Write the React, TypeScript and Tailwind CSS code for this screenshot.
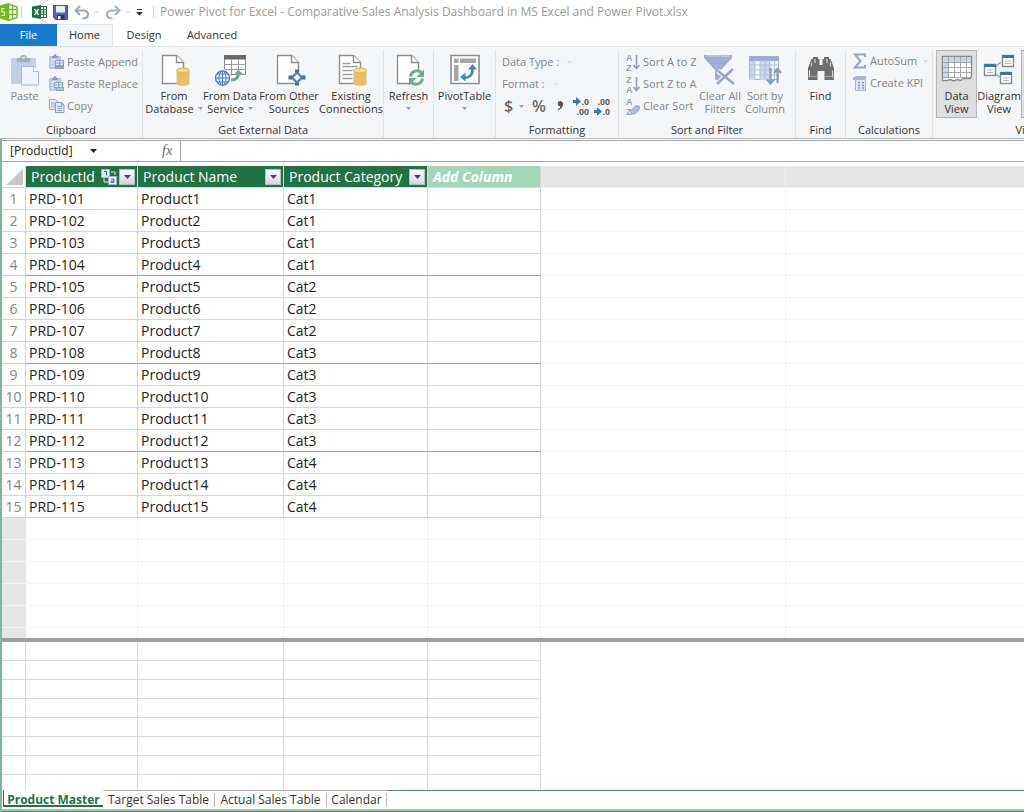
import { ReactNode } from "react";

type IconButtonProps = {
    label: string;
    icon: ReactNode;
    caret?: boolean;
};

type BigButtonProps = {
    lines: string[];
    icon: ReactNode;
    width: string;
    muted?: boolean;
    caret?: boolean;
    active?: boolean;
};

type GroupProps = {
    title?: string;
    width: string;
    children: ReactNode;
};

const products = [
    { id: "PRD-101", name: "Product1", category: "Cat1" },
    { id: "PRD-102", name: "Product2", category: "Cat1" },
    { id: "PRD-103", name: "Product3", category: "Cat1" },
    { id: "PRD-104", name: "Product4", category: "Cat1" },
    { id: "PRD-105", name: "Product5", category: "Cat2" },
    { id: "PRD-106", name: "Product6", category: "Cat2" },
    { id: "PRD-107", name: "Product7", category: "Cat2" },
    { id: "PRD-108", name: "Product8", category: "Cat3" },
    { id: "PRD-109", name: "Product9", category: "Cat3" },
    { id: "PRD-110", name: "Product10", category: "Cat3" },
    { id: "PRD-111", name: "Product11", category: "Cat3" },
    { id: "PRD-112", name: "Product12", category: "Cat3" },
    { id: "PRD-113", name: "Product13", category: "Cat4" },
    { id: "PRD-114", name: "Product14", category: "Cat4" },
    { id: "PRD-115", name: "Product15", category: "Cat4" },
];

const emptyRows = [1, 2, 3, 4, 5];
const measureRows = [1, 2, 3, 4, 5, 6, 7];

const Caret = ({ color = "#9a9a9a" }: { color?: string }) => (
    <svg width="5" height="3" viewBox="0 0 5 3" className="shrink-0">
        <path d="M0 0h5L2.500 3z" fill={color} />
    </svg>
);

/* ---------- quick access icons ---------- */

const PivotLogo = () => (
    <svg width="19" height="20" viewBox="0 0 19 20">
        <path d="M0 3.500L8 1v18L0 16.500z" fill="#74b92a" />
        <path d="M8.500 2L17 5v10.500L8.500 18.500z" fill="#fff" stroke="#74b92a" strokeWidth="1.500" />
        <path d="M12.500 3.500v13.500M8.500 7.500H17M8.500 12.500H17" stroke="#74b92a" strokeWidth="1.300" />
        <path d="M4.500 6.500H2v3.500h2.500v3.500H1.500" stroke="#dff2c4" strokeWidth="1.200" fill="none" />
    </svg>
);

const ExcelLogo = () => (
    <svg width="15" height="14" viewBox="0 0 15 14">
        <path d="M8 1.500h6.500v11H8z" fill="#fff" stroke="#217346" />
        <path d="M11.500 2v10M8 4.500h6M8 7h6M8 9.500h6" stroke="#217346" />
        <path d="M0 1.500L9 0v14L0 12.500z" fill="#1d6f42" />
        <path d="M2.500 4.200l4 5.600M6.500 4.200l-4 5.600" stroke="#fff" strokeWidth="1.400" />
    </svg>
);

const SaveIcon = () => (
    <svg width="15" height="15" viewBox="0 0 15 15">
        <path d="M.5.500h14v14h-12l-2-2z" fill="#5664b8" stroke="#4450a0" />
        <path d="M3 1h9v6.500H3z" fill="#e9ecfa" />
        <path d="M4 10h7.500v4.500H4z" fill="#2f3560" />
        <path d="M5 11h2.500v3H5z" fill="#fff" />
    </svg>
);

const UndoIcon = () => (
    <svg width="16" height="15" viewBox="0 0 16 15">
        <path d="M2 5.500h7.500c6.500 0 6 8-1 8" fill="none" stroke="#9aa6c4" strokeWidth="2.200" />
        <path d="M6 1L1.500 5.500 6 10" fill="none" stroke="#9aa6c4" strokeWidth="2.200" />
    </svg>
);

const RedoIcon = () => (
    <svg width="16" height="15" viewBox="0 0 16 15">
        <path d="M14 5.500H6.500c-6.500 0-6 8 1 8" fill="none" stroke="#a5b1cb" strokeWidth="2.200" />
        <path d="M10 1l4.500 4.500L10 10" fill="none" stroke="#a5b1cb" strokeWidth="2.200" />
    </svg>
);

/* ---------- ribbon icons ---------- */

const PasteIcon = () => (
    <svg width="30" height="32" viewBox="0 0 30 32">
        <path d="M1 4h25v26H1z" fill="#c3cee4" />
        <path d="M7 8V4h3c0-4 7-4 7 0h3v4z" fill="#a2abc0" />
        <path d="M12 3.500h3" stroke="#eef1f7" strokeWidth="1.500" />
        <path d="M11.500 12.500h12l5 5v13.500h-17z" fill="#f0f4fb" stroke="#aab9d6" />
        <path d="M23.500 12.500v5h5" fill="#fff" stroke="#aab9d6" />
    </svg>
);

const PasteAppendIcon = () => (
    <svg width="16" height="16" viewBox="0 0 16 16">
        <path d="M0 2h12v13H0z" fill="#bccae1" />
        <path d="M3 4V2h1.500c0-2.500 3-2.500 3 0H9v2z" fill="#8b9bb9" />
        <path d="M2 6h5M2 9h3M2 12h3" stroke="#eef2f8" />
        <path d="M6.500 6.500h8v8h-8z" fill="#e6ecf6" stroke="#8b9fc3" />
        <path d="M6.500 9h8M6.500 11.500h8M10.500 6.500v8" stroke="#8b9fc3" />
        <path d="M6 12h9v3H6z" fill="#8fa3c6" />
    </svg>
);

const PasteReplaceIcon = () => (
    <svg width="16" height="16" viewBox="0 0 16 16">
        <path d="M0 2h12v13H0z" fill="#bccae1" />
        <path d="M3 4V2h1.500c0-2.500 3-2.500 3 0H9v2z" fill="#8b9bb9" />
        <path d="M2 6h5M2 9h3M2 12h3" stroke="#eef2f8" />
        <path d="M5.500 6.500h8v5h-8z" fill="#e6ecf6" stroke="#8b9fc3" />
        <path d="M5.500 9h8M9.500 6.500v5" stroke="#8b9fc3" />
        <path d="M7 11h8v4H7z" fill="#8fa3c6" />
        <path d="M8 13h6" stroke="#dfe7f3" />
    </svg>
);

const CopyIcon = () => (
    <svg width="16" height="16" viewBox="0 0 16 16">
        <path d="M.5 1.500h6l2.500 2.500v7.500H.5z" fill="#e6ecf6" stroke="#9badcc" />
        <path d="M2 5h4M2 7h4M2 9h4" stroke="#9badcc" />
        <path d="M6.500 4.500h6l2.500 2.500v7.500H6.500z" fill="#dfe7f3" stroke="#8b9fc3" />
        <path d="M12.500 4.500v2.500H15M8.500 8.500h4.500M8.500 10.500h4.500M8.500 12.500h4.500" fill="none" stroke="#8b9fc3" />
    </svg>
);

const Page = () => (
    <>
        <path d="M1.500 1.500h14l7 7v21h-21z" fill="#fff" stroke="#8d8d8d" strokeWidth="1.400" />
        <path d="M15.500 1.500v7h7" fill="#fff" stroke="#8d8d8d" strokeWidth="1.400" />
    </>
);

const Cylinder = () => (
    <>
        <path d="M15.500 17v12.500c0 3 13 3 13 0V17z" fill="#e7bd66" />
        <ellipse cx="22" cy="16.500" rx="6.500" ry="2.500" fill="#f4d691" stroke="#e0b052" />
    </>
);

const FromDatabaseIcon = () => (
    <svg width="26" height="32" viewBox="0 0 26 32" className="overflow-visible">
        <Page />
        <Cylinder />
    </svg>
);

const DataServiceIcon = () => (
    <svg width="33" height="34" viewBox="0 0 33 34">
        <path d="M10.500 1.500h21v19h-21z" fill="#fff" stroke="#8d8d8d" />
        <path d="M10 1h22v4.500H10z" fill="#6a6a6a" />
        <path d="M10.500 10.500h21M10.500 15.500h21M17.500 5v15.500M24.500 5v15.500" stroke="#9c9c9c" />
        <circle cx="8.500" cy="24" r="8.500" fill="#f4f6f8" />
        <circle cx="8.500" cy="24" r="7" fill="#e8f0f9" stroke="#4d83bd" strokeWidth="1.400" />
        <path d="M1.500 24h14M8.500 17v14M3 20h11M3 28h11" stroke="#4d83bd" fill="none" />
        <ellipse cx="8.500" cy="24" rx="3.500" ry="7" fill="none" stroke="#4d83bd" />
        <path d="M17 26c6 0 7.500-3 7.500-7" fill="none" stroke="#74a98c" strokeWidth="3" />
        <path d="M19.500 21l5-5.500 5 5.500z" fill="#74a98c" />
    </svg>
);

const OtherSourcesIcon = () => (
    <svg width="26" height="32" viewBox="0 0 26 32" className="overflow-visible">
        <Page />
        <path d="M21 15.500l8.500 8-8.500 8-8.500-8z" fill="#f4f6f8" />
        <path d="M21 18.500l5 5-5 5-5-5z" fill="#fff" stroke="#5585b5" strokeWidth="2.400" />
        <path d="M19 15.500h4v3h-4zM19 28.500h4v3h-4zM12.500 21.500h3.500v4h-3.500zM26 21.500h3.500v4H26z" fill="#41709f" />
    </svg>
);

const ExistingIcon = () => (
    <svg width="26" height="32" viewBox="0 0 26 32" className="overflow-visible">
        <Page />
        <path d="M4.500 9.500h8M4.500 12.500h15M4.500 16.500h10M4.500 20.500h10M4.500 24.500h10" stroke="#a0a0a0" strokeWidth="1.400" />
        <Cylinder />
    </svg>
);

const RefreshIcon = () => (
    <svg width="26" height="32" viewBox="0 0 26 32" className="overflow-visible">
        <Page />
        <circle cx="20.500" cy="23.500" r="8.500" fill="#f4f6f8" />
        <path d="M14.500 22.500c1-6 8.500-7.500 11.500-3M26.500 24.500c-1 6-8.500 7.500-11.500 3" fill="none" stroke="#74a98c" strokeWidth="3" />
        <path d="M28 15.500v7.500h-7.500zM13 31.500V24h7.500z" fill="#74a98c" />
    </svg>
);

const PivotTableIcon = () => (
    <svg width="30" height="32" viewBox="0 0 30 32">
        <path d="M1 1.500h28v28H1z" fill="#fff" stroke="#8d8d8d" strokeWidth="1.600" />
        <path d="M4 4.500h4.500V9H4zM10 4.500h16V9H10zM4 11h4.500v16H4z" fill="#a5a5a5" />
        <path d="M13.500 23.500c6 1 9.500-3 9-9" fill="none" stroke="#4783c0" strokeWidth="2.600" />
        <path d="M18 15.500l4.500-5.500 4.500 5.500zM15.500 18.500v9l-5.500-4.500z" fill="#4783c0" />
    </svg>
);

const letters = "font-['Liberation_Sans',sans-serif] text-[9px] font-bold";

const SortIcon = ({ first, second }: { first: string; second: string }) => (
    <svg width="16" height="20" viewBox="0 0 16 20" className={`overflow-visible ${letters}`}>
        <text x="1" y="9" fill="#93a0bd">{first}</text>
        <text x="1" y="19" fill="#93a0bd">{second}</text>
        <path d="M11.500 3v13M8.500 13l3 3.500 3-3.500" fill="none" stroke="#93a0bd" strokeWidth="1.600" />
    </svg>
);

const ClearSortIcon = () => (
    <svg width="16" height="20" viewBox="0 0 16 20" className={`overflow-visible ${letters}`}>
        <text x="1" y="9" fill="#93a0bd">A</text>
        <text x="1" y="19" fill="#93a0bd">Z</text>
        <path d="M6 14.500l5-5 3.500 1-.5 3.500-4.500 4H6z" fill="#afbfdd" stroke="#93a5c8" />
    </svg>
);

const FunnelIcon = () => (
    <svg width="34" height="32" viewBox="0 0 34 32">
        <path d="M1 1h28v3L18 16v14l-6-5v-9L1 4z" fill="#9eaed0" />
        <path d="M3 2h24" stroke="#c0cbe1" strokeWidth="1.500" />
        <path d="M15 17l16 13M30 15L14 30" stroke="#f4f6f8" strokeWidth="5" />
        <path d="M15 17l16 13M30 15L14 30" stroke="#9ba8c4" strokeWidth="2.600" />
    </svg>
);

const SortColumnIcon = () => (
    <svg width="34" height="32" viewBox="0 0 34 32">
        <path d="M1.500 2.500h29v23h-29z" fill="#f3f6fb" stroke="#9fb1d2" />
        <path d="M12 6h10v20H12zM2 6h5v20H2z" fill="#cbd6ea" />
        <path d="M1 2h30v5H1z" fill="#9cadce" />
        <path d="M1.500 11h29M1.500 16h29M1.500 21h29M7 6v20M12 6v20M17 6v20M22 6v20M26.500 6v20" stroke="#b3c1dc" />
        <path d="M22.500 14v15M19 25.500l3.500 4 3.500-4M29.500 29V15M26 19l3.500-4 3.500 4" fill="none" stroke="#8c9dbf" strokeWidth="2.200" />
    </svg>
);

const BinocularsIcon = () => (
    <svg width="28" height="28" viewBox="0 0 28 28">
        <path d="M6 3h5v2h1.500v6h3V5H17V3h5v2h1.500l3.500 9v12h-9.500v-9h-7v9H1V14l3.500-9H6z" fill="#6f6f6f" />
        <path d="M4.500 8.500v4M23.500 8.500v4M2.500 16.500v7M25.500 16.500v7M8 5v4M20 5v4" stroke="#d7d7d7" strokeWidth="1.200" />
        <path d="M1 22.500h9.500M17.500 22.500H27" stroke="#a5a5a5" />
    </svg>
);

const SumIcon = () => (
    <svg width="14" height="16" viewBox="0 0 14 16">
        <path d="M12 4V1.500H2L7.500 8 2 14.500h10V12" fill="none" stroke="#94a5c6" strokeWidth="2" />
    </svg>
);

const KpiIcon = () => (
    <svg width="14" height="16" viewBox="0 0 14 16">
        <path d="M2.500 1.500h10v14h-10z" fill="#dfe6f2" stroke="#a4b4d1" />
        <path d="M0 2h13v3H0z" fill="#a9b8d4" />
        <path d="M5 7.500h2M9 7.500h2M5 10.500h2M9 10.500h2M5 13h2M9 13h2" stroke="#8799bd" strokeWidth="1.400" />
    </svg>
);

const DataViewIcon = () => (
    <svg width="32" height="32" viewBox="0 0 32 32">
        <path d="M1.500 2.500h29v19l-1 3h-7l-3 2-3-1-4 1.500-3-1.500-3 1H1.500z" fill="#fff" stroke="#8a8a8a" strokeWidth="1.400" />
        <path d="M2 3h28v5H2zM2 8h5.500v16H2z" fill="#c5d8ea" />
        <path d="M2 8.500h28M2 13.500h28M2 18.500h28M2 23.500h27M7.500 3v20M13.500 3v20M19.500 3v20M25.500 3v20" stroke="#a8a8a8" />
    </svg>
);

const DiagramViewIcon = () => (
    <svg width="32" height="32" viewBox="0 0 32 32">
        <path d="M12 13l6-5M12 20l5 3" stroke="#8da694" strokeWidth="1.400" />
        <path d="M19.500 1.500h11v11h-11zM1.500 10.500h11v11h-11zM17.500 18.500h11v11h-11z" fill="#fff" stroke="#8a8a8a" strokeWidth="1.400" />
        <path d="M19 1h12v3H19zM1 10h12v3H1zM17 18h12v3H17z" fill="#3a75ac" />
        <path d="M22 7h6M22 9.500h6M4 16h6M4 18.500h6M20 24h6M20 26.500h6" stroke="#b5b5b5" />
    </svg>
);

const DecimalIcon = ({ top, bottom, increase }: { top: string; bottom: string; increase?: boolean }) => (
    <svg width="17" height="20" viewBox="0 0 17 20" className={`overflow-visible ${letters}`}>
        <text x="17" y="9" textAnchor="end" fill="#555">{top}</text>
        <text x="17" y="19" textAnchor="end" fill="#555">{bottom}</text>
        {increase ? (
            <path d="M1 4h3V1l5 4.500-5 4.500V7H1z" fill="#3d78b4" />
        ) : (
            <path d="M1 14h3v-3l5 4.500-5 4.500v-3H1z" fill="#3d78b4" />
        )}
    </svg>
);

/* ---------- ribbon parts ---------- */

const Group = ({ title, width, children }: GroupProps) => (
    <section className={`${width} flex shrink-0 flex-col border-r border-[#e2e4e6]`}>
        <div className="flex h-[73px] justify-center">{children}</div>
        <h2 className="text-center leading-4">{title}</h2>
    </section>
);

const BigButton = ({ lines, icon, width, muted, caret, active }: BigButtonProps) => (
    <button
        className={`${width} flex h-[68px] shrink-0 flex-col items-center border pt-[3px] leading-[13px] whitespace-nowrap ${
            active ? "border-[#b5b5b5] bg-[#dedede]" : "border-transparent"
        } ${muted ? "text-[#858585]" : "text-[#333]"}`}
    >
        <span className="flex h-[35px] items-start justify-center">{icon}</span>
        {lines.map((line, index) => (
            <span key={line} className="flex items-center gap-1">
                {line}
                {caret && index === 1 && <Caret />}
            </span>
        ))}
        {caret && lines.length === 1 && <span className="flex h-3 items-center"><Caret /></span>}
    </button>
);

const SmallButton = ({ label, icon, caret }: IconButtonProps) => (
    <button className="flex h-[22px] items-center gap-0.5 whitespace-nowrap text-[#858585]">
        <span className="flex w-4 justify-center">{icon}</span>
        {label}
        {caret && <span className="pl-1"><Caret color="#dcdcdc" /></span>}
    </button>
);

const Ribbon = () => (
    <div className="flex h-[93px] overflow-hidden border-y border-t-[#e3e5e7] border-b-[#b3b6b9] bg-[#f4f6f8] pt-[3px] text-[11px] text-[#333]">
        <Group title="Clipboard" width="w-[143px]">
            <BigButton width="w-[49px]" lines={["Paste"]} icon={<PasteIcon />} muted />
            <div className="flex flex-1 flex-col pt-px">
                <SmallButton label="Paste Append" icon={<PasteAppendIcon />} />
                <SmallButton label="Paste Replace" icon={<PasteReplaceIcon />} />
                <SmallButton label="Copy" icon={<CopyIcon />} />
            </div>
        </Group>
        <Group title="Get External Data" width="w-[241px]">
            <BigButton width="w-[58px]" lines={["From", "Database"]} icon={<FromDatabaseIcon />} caret />
            <BigButton width="w-[54px]" lines={["From Data", "Service"]} icon={<DataServiceIcon />} caret />
            <BigButton width="w-[64px]" lines={["From Other", "Sources"]} icon={<OtherSourcesIcon />} />
            <BigButton width="w-[60px]" lines={["Existing", "Connections"]} icon={<ExistingIcon />} />
        </Group>
        <Group width="w-[50px]">
            <BigButton width="w-[46px]" lines={["Refresh"]} icon={<RefreshIcon />} caret />
        </Group>
        <Group width="w-[62px]">
            <BigButton width="w-[58px]" lines={["PivotTable"]} icon={<PivotTableIcon />} caret />
        </Group>
        <Group title="Formatting" width="w-[123px]">
            <div className="flex flex-1 flex-col pt-px pl-1.5 text-[#858585]">
                <button className="flex h-[22px] items-center gap-2">
                    Data Type : <Caret color="#e3e3e3" />
                </button>
                <button className="flex h-[22px] items-center gap-2">
                    Format : <Caret color="#e3e3e3" />
                </button>
                <div className="flex h-[22px] items-center text-base leading-5 text-[#666]">
                    <button className="flex w-7 items-center gap-1.5 pl-0.5 font-semibold">
                        $ <Caret />
                    </button>
                    <button className="w-[18px] font-semibold">%</button>
                    <button className="flex w-6 justify-center" aria-label="Comma style">
                        <svg width="7" height="10" viewBox="0 0 7 10">
                            <path d="M3 0c4 0 5 6-2 9.500L.5 8.500C3 7 3.500 6 3 5 0 5.500 0 0 3 0z" fill="#555" />
                        </svg>
                    </button>
                    <button className="w-[21px]"><DecimalIcon top=".0" bottom=".00" increase /></button>
                    <button><DecimalIcon top=".00" bottom=".0" /></button>
                </div>
            </div>
        </Group>
        <Group title="Sort and Filter" width="w-[177px]">
            <div className="flex flex-1 flex-col pt-px pl-1.5">
                <SmallButton label="Sort A to Z" icon={<SortIcon first="A" second="Z" />} />
                <SmallButton label="Sort Z to A" icon={<SortIcon first="Z" second="A" />} />
                <SmallButton label="Clear Sort" icon={<ClearSortIcon />} />
            </div>
            <BigButton width="w-[44px]" lines={["Clear All", "Filters"]} icon={<FunnelIcon />} muted />
            <div className="w-[53px]">
                <BigButton width="w-[46px]" lines={["Sort by", "Column"]} icon={<SortColumnIcon />} muted />
            </div>
        </Group>
        <Group title="Find" width="w-[50px]">
            <BigButton width="w-[46px]" lines={["Find"]} icon={<BinocularsIcon />} />
        </Group>
        <Group title="Calculations" width="w-[87px]">
            <div className="flex flex-1 flex-col pl-1.5">
                <SmallButton label="AutoSum" icon={<SumIcon />} caret />
                <SmallButton label="Create KPI" icon={<KpiIcon />} />
            </div>
        </Group>
        <Group title="View" width="w-[190px]">
            <div className="flex flex-1 pl-[3px]">
                <BigButton width="w-[41px]" lines={["Data", "View"]} icon={<DataViewIcon />} active />
                <BigButton width="w-[44px]" lines={["Diagram", "View"]} icon={<DiagramViewIcon />} />
                <BigButton width="w-[44px]" lines={[]} icon={null} active />
            </div>
        </Group>
    </div>
);

/* ---------- grid parts ---------- */

const FilterButton = ({ column }: { column: string }) => (
    <button
        aria-label={`Filter ${column}`}
        className="flex h-4 w-4 shrink-0 items-center justify-center border border-[#b9bcc9] bg-linear-to-b from-white to-[#d3d6e2]"
    >
        <svg width="7" height="4" viewBox="0 0 7 4">
            <path d="M0 0h7L3.500 4z" fill="#3f4675" />
        </svg>
    </button>
);

const KeyIcon = () => (
    <svg width="16" height="16" viewBox="0 0 16 16" className="shrink-0">
        <path d="M.5.500h8v8h-8z" fill="#dfe8f7" stroke="#a3b4d4" />
        <path d="M3 2.500h2.500v4" stroke="#4a62a0" fill="none" />
        <path d="M3 9v4h4M10 3h4v3" stroke="#e3e9f5" fill="none" />
        <path d="M7.500 7.500h8v8h-8z" fill="#f2f6fd" stroke="#a3b4d4" />
        <path d="M10 10h3v3.500h-3v-1.500h3" stroke="#4a62a0" fill="none" />
    </svg>
);

const HeaderCell = ({ title, hasKey }: { title: string; hasKey?: boolean }) => (
    <th scope="col" className="h-[22px] border-r border-b border-[#d6dcd8] bg-[#217346] p-0 pt-px font-normal text-white">
        <div className="flex items-center gap-0.5 pr-0.5 pl-[5px]">
            <span className="flex-1 text-left whitespace-nowrap">{title}</span>
            {hasKey && <KeyIcon />}
            <FilterButton column={title} />
        </div>
    </th>
);

const Columns = () => (
    <colgroup>
        <col className="w-6" />
        <col className="w-[112px]" />
        <col className="w-[146px]" />
        <col className="w-[144px]" />
        <col className="w-[113px]" />
        <col className="w-[245px]" />
        <col />
    </colgroup>
);

const DataGrid = () => (
    <table className="w-full table-fixed border-separate border-spacing-0 text-sm leading-5 text-[#222]">
        <Columns />
        <thead>
            <tr>
                <th className="h-[22px] border-r border-b border-[#d9d9d9] p-0">
                    <svg width="17" height="16" viewBox="0 0 17 16" className="ml-1">
                        <path d="M17 0v16H0z" fill="#c6c6c6" />
                    </svg>
                </th>
                <HeaderCell title="ProductId" hasKey />
                <HeaderCell title="Product Name" />
                <HeaderCell title="Product Category" />
                <th scope="col" className="border-r border-b border-[#d9d9d9] bg-[#a3d6b8] p-0 pt-px pl-[5px] text-left font-bold text-white italic">
                    Add Column
                </th>
                <th className="border-r border-b border-[#f0f0f0] bg-[#e6e6e6] p-0"></th>
                <th className="border-b border-[#f0f0f0] bg-[#e6e6e6] p-0"></th>
            </tr>
        </thead>
        <tbody>
            {products.map((product, index) => {
                const heavy = index === 3 || index === 7 || index === 11;
                const cell = `h-[22px] border-r border-b border-r-[#d4d4d4] p-0 pt-px pl-[3px] ${heavy ? "border-b-[#999]" : "border-b-[#d4d4d4]"}`;

                return (
                    <tr key={product.id}>
                        <th scope="row" className="border-r border-b border-[#d4d4d4] p-0 pt-px text-center font-normal text-[#858585]">
                            {index + 1}
                        </th>
                        <td className={cell}>{product.id}</td>
                        <td className={cell}>{product.name}</td>
                        <td className={cell}>{product.category}</td>
                        <td className={cell}></td>
                        <td className="border-r border-b border-[#f3f3f3] p-0"></td>
                        <td className="border-b border-[#f3f3f3] p-0"></td>
                    </tr>
                );
            })}
            {emptyRows.map((row) => (
                <tr key={row}>
                    <td className="h-[22px] border-b border-[#f3f3f3] bg-[#e6e6e6] p-0"></td>
                    <td className="border-r border-b border-[#f3f3f3] p-0"></td>
                    <td className="border-r border-b border-[#f3f3f3] p-0"></td>
                    <td className="border-r border-b border-[#f3f3f3] p-0"></td>
                    <td className="border-r border-b border-[#f3f3f3] p-0"></td>
                    <td className="border-r border-b border-[#f3f3f3] p-0"></td>
                    <td className="border-b border-[#f3f3f3] p-0"></td>
                </tr>
            ))}
            <tr>
                <td className="h-2.5 bg-[#e6e6e6] p-0"></td>
                <td className="border-r border-[#f3f3f3] p-0"></td>
                <td className="border-r border-[#f3f3f3] p-0"></td>
                <td className="border-r border-[#f3f3f3] p-0"></td>
                <td className="border-r border-[#f3f3f3] p-0"></td>
                <td className="border-r border-[#f3f3f3] p-0"></td>
                <td className="p-0"></td>
            </tr>
        </tbody>
    </table>
);

const MeasureGrid = () => (
    <table className="w-full table-fixed border-separate border-spacing-0">
        <Columns />
        <tbody>
            {measureRows.map((row) => (
                <tr key={row}>
                    <td className="h-[19px] border-r border-b border-[#d9d9d9] p-0"></td>
                    <td className="border-r border-b border-[#d9d9d9] p-0"></td>
                    <td className="border-r border-b border-[#d9d9d9] p-0"></td>
                    <td className="border-r border-b border-[#d9d9d9] p-0"></td>
                    <td className="border-r border-b border-[#d9d9d9] p-0"></td>
                    <td className="p-0"></td>
                    <td className="p-0"></td>
                </tr>
            ))}
            <tr>
                <td className="h-[15px] border-r border-[#d9d9d9] p-0"></td>
                <td className="border-r border-[#d9d9d9] p-0"></td>
                <td className="border-r border-[#d9d9d9] p-0"></td>
                <td className="border-r border-[#d9d9d9] p-0"></td>
                <td className="border-r border-[#d9d9d9] p-0"></td>
                <td className="p-0"></td>
                <td className="p-0"></td>
            </tr>
        </tbody>
    </table>
);

const SheetTab = ({ label, width }: { label: string; width: string }) => (
    <button className={`${width} flex items-center border-t border-[#b5b5b5] leading-4 whitespace-nowrap`}>
        <span className="flex-1 text-center">{label}</span>
        <span className="h-3.5 w-px bg-[#b5b5b5]"></span>
    </button>
);

const App = () => {
    return (
        <div className="flex min-h-screen flex-col bg-white font-['Open_Sans','Noto_Sans',sans-serif] text-[#333]">
            <header className="flex h-6 items-center overflow-hidden">
                <PivotLogo />
                <span className="ml-0.5 h-3 w-px bg-[#cfcfcf]"></span>
                <div className="flex items-center pl-2.5">
                    <button aria-label="Excel" className="w-[21px]"><ExcelLogo /></button>
                    <button aria-label="Save" className="w-[21px]"><SaveIcon /></button>
                    <button aria-label="Undo" className="flex w-[31px] items-center gap-1"><UndoIcon /><Caret color="#e3e3e3" /></button>
                    <button aria-label="Redo" className="flex w-[31px] items-center gap-1"><RedoIcon /><Caret color="#e3e3e3" /></button>
                    <button aria-label="Customize toolbar" className="w-[17px]">
                        <svg width="7" height="7" viewBox="0 0 7 7">
                            <path d="M1 0h5v1H1zM0 3h7L3.500 6.500z" fill="#333" />
                        </svg>
                    </button>
                </div>
                <span className="h-3 w-px bg-[#cfcfcf]"></span>
                <h1 className="pl-1.5 text-xs whitespace-nowrap text-[#9b9b9b]">
                    Power Pivot for Excel - Comparative Sales Analysis Dashboard in MS Excel and Power Pivot.xlsx
                </h1>
            </header>

            <nav className="flex h-[22px] text-[11px]">
                <button className="w-[57px] bg-[#1979ca] text-white">File</button>
                <button className="w-14 border-t border-r border-[#e3e5e7] bg-[#f4f6f8]">Home</button>
                <button className="w-[62px]">Design</button>
                <button className="w-[74px]">Advanced</button>
            </nav>

            <Ribbon />

            <main className="flex flex-1 flex-col border-l-2 border-[#7fb598] pt-px">
                <div className="flex h-[22px] items-center border-y border-[#a5a5a5] text-xs">
                    <select aria-label="Column" className="w-[82px] appearance-none pl-2 text-[#222]">
                        <option>[ProductId]</option>
                    </select>
                    <span className="w-[78px] pl-1.5">
                        <svg width="7" height="4" viewBox="0 0 7 4">
                            <path d="M0 0h7L3.500 4z" fill="#222" />
                        </svg>
                    </span>
                    <span className="w-[18px] font-['Liberation_Serif',serif] text-sm text-[#666] italic">fx</span>
                    <input aria-label="Formula" className="h-full min-w-0 flex-1 border-l border-[#a5a5a5] outline-none" />
                </div>
                <div className="h-1"></div>

                <DataGrid />
                <div className="h-1 bg-[#9f9f9f]"></div>
                <MeasureGrid />

                <div className="flex flex-1 text-xs">
                    <div className="w-[101px] pl-px">
                        <button className="h-[17px] w-full border-b-2 border-l border-[#217346] pt-0.5 leading-4 font-bold whitespace-nowrap text-[#217346] underline">
                            Product Master
                        </button>
                    </div>
                    <SheetTab label="Target Sales Table" width="w-[112px]" />
                    <SheetTab label="Actual Sales Table" width="w-[112px]" />
                    <SheetTab label="Calendar" width="w-[60px]" />
                    <div className="flex-1 border-t border-[#4f8a6c]"></div>
                </div>
                <div className="h-[3px] border-b border-[#4f8a6c] bg-[#a1c8b0]"></div>
            </main>
        </div>
    );
};

export default App;
